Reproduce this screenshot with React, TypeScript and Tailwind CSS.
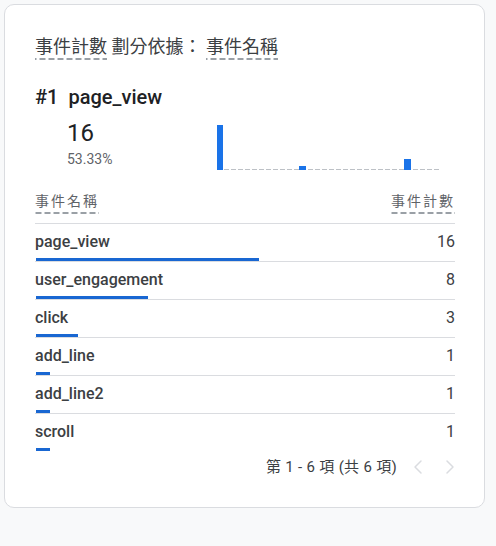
import { ChevronLeft, ChevronRight } from "lucide-react";

const rows = [
  { name: "page_view", count: 16 },
  { name: "user_engagement", count: 8 },
  { name: "click", count: 3 },
  { name: "add_line", count: 1 },
  { name: "add_line2", count: 1 },
  { name: "scroll", count: 1 },
];

const total = rows.reduce((s, r) => s + r.count, 0);

const dashed =
  "bg-[linear-gradient(to_right,#9aa0a6_66%,transparent_66%)] bg-[length:9px_2px] bg-repeat-x bg-bottom";

const MiniChart = () => (
  <svg width="224" height="50" viewBox="0 0 224 50">
    <line x1="7" y1="49.5" x2="224" y2="49.5" stroke="#bdc1c6" strokeWidth="1" strokeDasharray="5 2" />
    <rect x="0" y="5" width="6" height="45" fill="#1a73e8" />
    <rect x="82" y="46" width="7" height="4" fill="#1a73e8" />
    <rect x="187" y="39" width="7" height="11" fill="#1a73e8" />
  </svg>
);

const App = () => {
  return (
    <div
      className="min-h-screen bg-[#f8f9fa] pt-[4px] pl-[4px]"
      style={{ fontFamily: "Roboto, 'Noto Sans CJK TC', sans-serif" }}
    >
      <div className="w-[481px] rounded-[10px] border border-[#dadce0] bg-white pl-[30px] pr-[29px] pt-[30px] pb-[28px]">
        {/* Title */}
        <div className="text-[18px] leading-[24px] text-[#3c4043]">
          <span className={`inline-block pb-[1px] ${dashed}`}>事件計數</span>
          {" 劃分依據： "}
          <span className={`inline-block pb-[1px] ${dashed}`}>事件名稱</span>
        </div>

        {/* Top item */}
        <div className="mt-[23px] flex items-center gap-[10px] text-[20px] leading-[28px] font-medium text-[#202124]">
          <span>#1</span>
          <span>page_view</span>
        </div>
        <div className="mt-[7px] flex items-end">
          <div className="w-[182px] pl-[32px]">
            <div className="text-[24px] leading-[30px] text-[#202124]">16</div>
            <div className="text-[14px] leading-[22px] text-[#5f6368]">53.33%</div>
          </div>
          <MiniChart />
        </div>

        {/* Table header */}
        <div className="mt-[21px] flex items-end justify-between border-b border-[#dadce0] pb-[9px] text-[14px] leading-[20px] tracking-[2px] text-[#5f6368]">
          <span className={`inline-block pb-[3px] ${dashed}`}>事件名稱</span>
          <span className={`inline-block pb-[3px] ${dashed}`}>事件計數</span>
        </div>

        {/* Rows */}
        {rows.map((r, i) => (
          <div
            key={r.name}
            className={`pt-[8px] ${i < rows.length - 1 ? "border-b border-[#dadce0]" : ""}`}
          >
            <div className="flex items-center justify-between text-[16px] leading-[20px] text-[#3c4043]">
              <span className="font-medium">{r.name}</span>
              <span>{r.count}</span>
            </div>
            <div className="mt-[6px] h-[3px] pl-px">
              <div
                className="h-full bg-[#1967d2]"
                style={{ width: `${(r.count / total) * 100}%` }}
              />
            </div>
          </div>
        ))}

        {/* Pagination */}
        <div className="mt-[4px] -mr-[7px] flex items-center justify-end text-[15px] leading-[20px] tracking-[0.3px] text-[#3c4043]">
          <span>第 1 - 6 項 (共 6 項)</span>
          <ChevronLeft className="ml-[9px] h-6 w-6 text-[#dadce0]" strokeWidth={1.5} />
          <ChevronRight className="ml-[8px] h-6 w-6 text-[#dadce0]" strokeWidth={1.5} />
        </div>
      </div>
    </div>
  );
};

export default App;
